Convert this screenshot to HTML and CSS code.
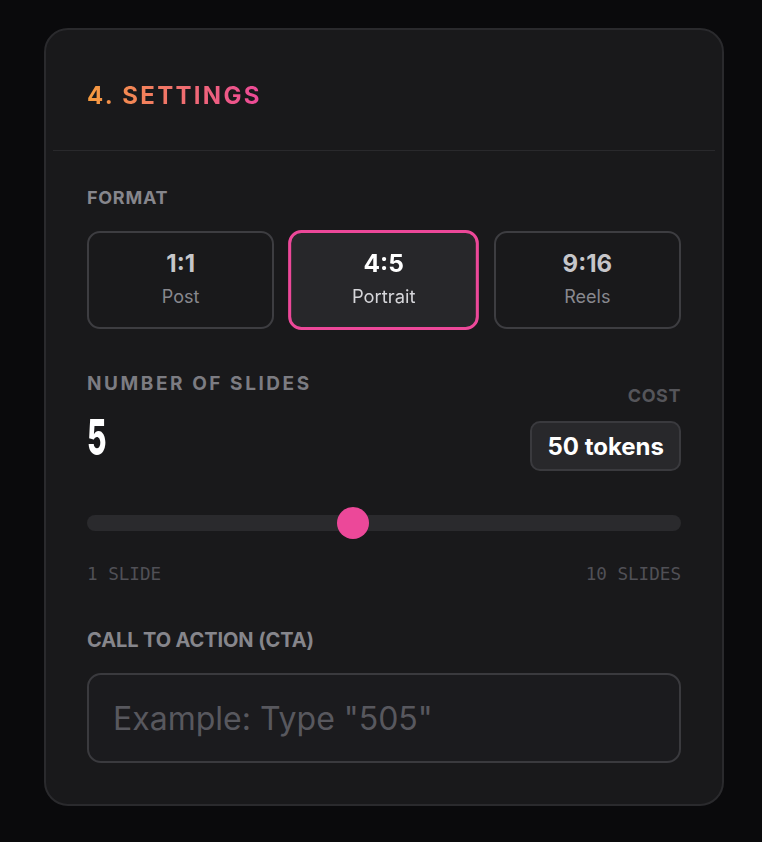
FILE: index.html
```html
<!DOCTYPE html>
<html>
    <head>
        <meta charset="utf-8">
        <title>Settings</title>
        <link rel="stylesheet" href="styles.css">
    </head>
    <body>
        <div class="card">
            <div class="card-head">
                <h2 class="step-title">4. SETTINGS</h2>
            </div>
            <div class="card-body">
                <div class="label">FORMAT</div>
                <div class="formats">
                    <button class="format">
                        <span class="ratio">1:1</span>
                        <span class="kind">Post</span>
                    </button>
                    <button class="format active">
                        <span class="ratio">4:5</span>
                        <span class="kind">Portrait</span>
                    </button>
                    <button class="format">
                        <span class="ratio">9:16</span>
                        <span class="kind">Reels</span>
                    </button>
                </div>

                <div class="slides-row">
                    <div>
                        <div class="label wide">NUMBER OF SLIDES</div>
                        <div class="count"><span>5</span></div>
                    </div>
                    <div class="cost">
                        <div class="label dim">COST</div>
                        <div class="tokens">50 tokens</div>
                    </div>
                </div>

                <input type="range" class="slider" min="1" max="10" value="5">
                <div class="range-labels">
                    <span>1 SLIDE</span>
                    <span>10 SLIDES</span>
                </div>

                <div class="label tight">CALL TO ACTION (CTA)</div>
                <input type="text" class="cta" placeholder='Example: Type "505"'>
            </div>
        </div>
    </body>
</html>
```

FILE: styles.css
```css
body {
    margin: 0;
    background-color: #0a0a0c;
    font-family: Inter, "Noto Sans", sans-serif;
}
.card {
    box-sizing: border-box;
    width: 680px;
    margin: 28px 0 0 44px;
    background-color: #19191b;
    border: 2px solid #2a2a2d;
    border-radius: 24px;
}
.card-head {
    margin: 0 7px;
    padding: 52px 34px 40px;
    border-bottom: 1px solid #29292c;
}
.step-title {
    margin: 0;
    font-size: 24px;
    line-height: 28px;
    font-weight: 700;
    letter-spacing: 2.3px;
    background-image: linear-gradient(90deg, #f59b3e, #ec4899 100%);
    -webkit-background-clip: text;
    background-clip: text;
    color: transparent;
    display: inline-block;
}
.card-body {
    padding: 36px 41px 41px;
}
.label {
    font-size: 18px;
    line-height: 22px;
    font-weight: 700;
    color: #86868c;
    letter-spacing: 0.04em;
}
.label.wide {
    font-size: 19px;
    letter-spacing: 0.135em;
    color: #7c7c82;
}
.label.dim {
    color: #55555a;
    letter-spacing: 0.03em;
}
.label.tight {
    font-size: 20px;
    letter-spacing: -0.005em;
}
.formats {
    display: grid;
    grid-template-columns: repeat(3, 1fr);
    gap: 16px;
    margin-top: 22px;
}
.format {
    box-sizing: border-box;
    height: 98px;
    padding: 17px 0 0;
    display: flex;
    flex-direction: column;
    align-items: center;
    gap: 8px;
    background-color: #19191b;
    border: 2px solid #3d3d41;
    border-radius: 13px;
    font-family: inherit;
    cursor: pointer;
}
.format .ratio {
    font-size: 24px;
    line-height: 28px;
    font-weight: 700;
    color: #c6c6ca;
}
.format .kind {
    font-size: 18px;
    line-height: 22px;
    color: #88888e;
}
.format.active {
    padding-top: 16px;
    border: 3px solid #ec4899;
    background-color: #27272a;
    transform: scale(1.02);
}
.format.active .ratio {
    color: #fff;
}
.format.active .kind {
    color: #d6d6da;
}
.slides-row {
    display: flex;
    justify-content: space-between;
    margin-top: 44px;
}
.count {
    margin-top: 17px;
    height: 50px;
    font-size: 50px;
    line-height: 50px;
    font-weight: 800;
    color: #fff;
}
.count span {
    display: inline-block;
    transform: scaleX(0.6);
    transform-origin: left;
}
.cost {
    display: flex;
    flex-direction: column;
    align-items: flex-end;
    padding-top: 12px;
}
.tokens {
    box-sizing: border-box;
    margin-top: 14px;
    height: 50px;
    padding: 0 15px;
    display: flex;
    align-items: center;
    background-color: #28282b;
    border: 2px solid #3a3a3e;
    border-radius: 10px;
    font-size: 24px;
    font-weight: 700;
    color: #fff;
}
.slider {
    -webkit-appearance: none;
    appearance: none;
    display: block;
    width: 100%;
    height: 32px;
    margin: 36px 0 0;
    background: transparent;
}
.slider::-webkit-slider-runnable-track {
    height: 16px;
    background-color: #2a2a2d;
    border-radius: 8px;
}
.slider::-webkit-slider-thumb {
    -webkit-appearance: none;
    width: 32px;
    height: 32px;
    margin-top: -8px;
    border-radius: 50%;
    background-color: #ec4899;
}
.range-labels {
    display: flex;
    justify-content: space-between;
    margin-top: 25px;
    font-family: "DejaVu Sans Mono", "Liberation Mono", monospace;
    font-size: 17.6px;
    line-height: 20px;
    color: #505056;
}
.range-labels + .label {
    margin-top: 45px;
}
.cta {
    box-sizing: border-box;
    display: block;
    width: 100%;
    height: 90px;
    margin-top: 22px;
    padding: 0 24px;
    background-color: #1b1b1e;
    border: 2px solid #3a3a3e;
    border-radius: 14px;
    font-family: inherit;
    font-size: 32px;
    color: #fff;
    outline: none;
}
.cta::placeholder {
    color: #58585e;
}
```
